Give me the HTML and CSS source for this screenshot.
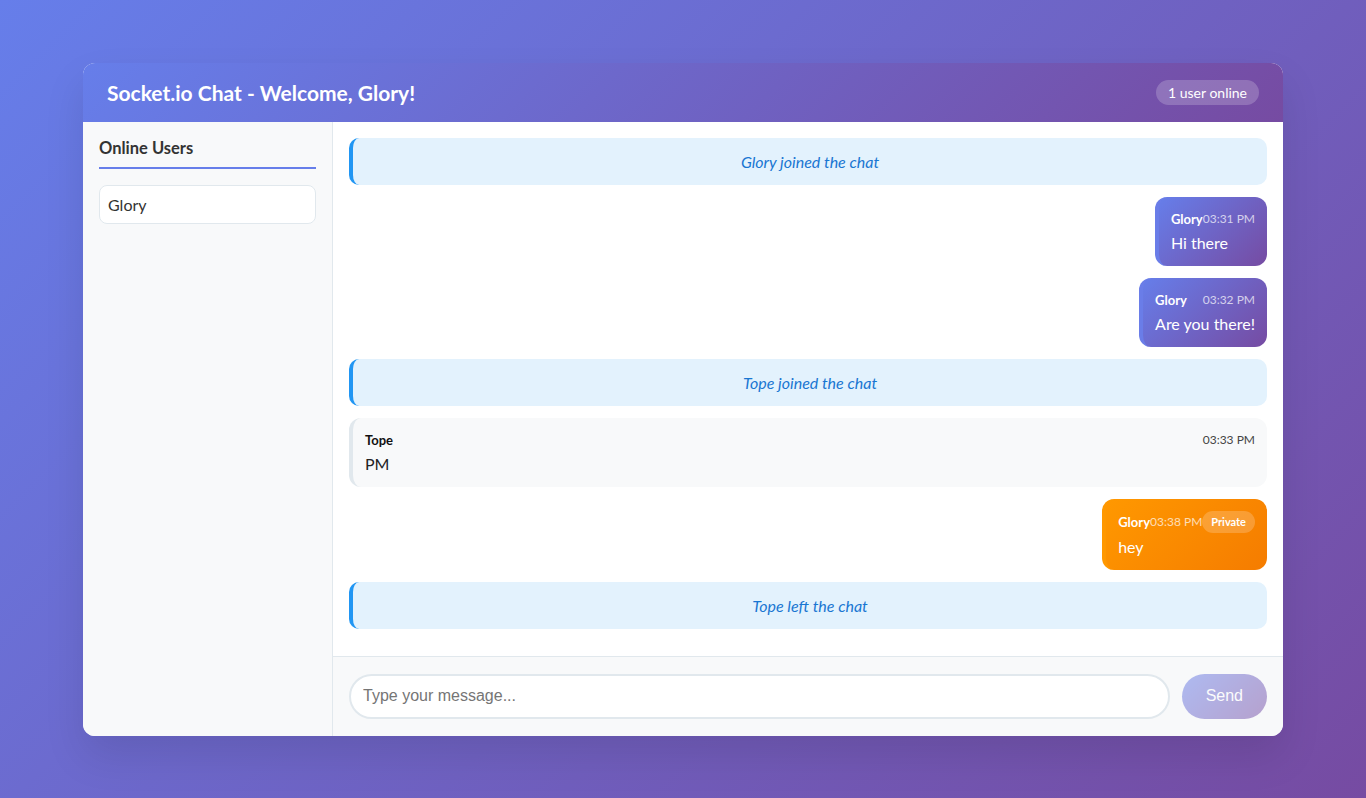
FILE: index.html
```html
<!DOCTYPE html>
<html lang="en">
<head>
<meta charset="utf-8">
<title>Socket.io Chat</title>
<link rel="stylesheet" href="styles.css">
</head>
<body>
<div class="chat-container">
  <header class="chat-header">
    <h1 class="chat-title">Socket.io Chat - Welcome, Glory!</h1>
    <span class="online-badge">1 user online</span>
  </header>
  <div class="chat-body">
    <aside class="sidebar">
      <h3 class="sidebar-title">Online Users</h3>
      <ul class="user-list">
        <li class="user-item">Glory</li>
      </ul>
    </aside>
    <main class="chat-main">
      <div class="messages">
        <div class="message system">Glory joined the chat</div>
        <div class="message own">
          <div class="msg-header"><span class="msg-name">Glory</span><span class="msg-time">03:31 PM</span></div>
          <div class="msg-text">Hi there</div>
        </div>
        <div class="message own">
          <div class="msg-header"><span class="msg-name">Glory</span><span class="msg-time">03:32 PM</span></div>
          <div class="msg-text">Are you there!</div>
        </div>
        <div class="message system">Tope joined the chat</div>
        <div class="message other">
          <div class="msg-header"><span class="msg-name">Tope</span><span class="msg-time">03:33 PM</span></div>
          <div class="msg-text">PM</div>
        </div>
        <div class="message own private">
          <div class="msg-header"><span class="msg-name">Glory</span><span class="msg-time">03:38 PM</span><span class="private-tag">Private</span></div>
          <div class="msg-text">hey</div>
        </div>
        <div class="message system">Tope left the chat</div>
      </div>
      <form class="input-bar">
        <input class="msg-input" type="text" placeholder="Type your message...">
        <button class="send-btn" type="button" disabled>Send</button>
      </form>
    </main>
  </div>
</div>
</body>
</html>
```

FILE: styles.css
```css
* { box-sizing: border-box; }

html, body { height: 100%; }

body {
  margin: 0;
  font-family: Lato, "Open Sans", sans-serif;
  line-height: 1.5;
  background: linear-gradient(135deg, #667eea 0%, #764ba2 100%);
  display: flex;
  align-items: center;
  justify-content: center;
}

.chat-container {
  width: 1200px;
  height: 673px;
  background: #fff;
  border-radius: 12px;
  overflow: hidden;
  display: flex;
  flex-direction: column;
  box-shadow: 0 20px 40px rgba(0, 0, 0, 0.1);
}

.chat-header {
  height: 59px;
  flex-shrink: 0;
  padding: 0 24px;
  display: flex;
  align-items: center;
  justify-content: space-between;
  color: #fff;
  background: linear-gradient(135deg, #667eea 0%, #764ba2 100%);
}

.chat-title {
  margin: 0;
  padding-top: 2px;
  font-size: 21px;
  font-weight: 700;
  line-height: 1.2;
}

.online-badge {
  font-size: 14px;
  line-height: 17px;
  padding: 4px 12px;
  border-radius: 13px;
  background: rgba(255, 255, 255, 0.2);
}

.chat-body {
  flex: 1;
  display: flex;
  min-height: 0;
}

.sidebar {
  width: 250px;
  flex-shrink: 0;
  background: #f8f9fa;
  border-right: 1px solid #e1e8ed;
  padding: 16px;
}

.sidebar-title {
  margin: 0 0 16px;
  padding-top: 1px;
  font-size: 16.5px;
  font-weight: 700;
  line-height: 19px;
  color: #333;
  padding-bottom: 9px;
  border-bottom: 2px solid #667eea;
}

.user-list {
  list-style: none;
  margin: 0;
  padding: 0;
}

.user-item {
  background: #fff;
  border: 1px solid #e1e8ed;
  border-radius: 8px;
  padding: 9px 8px;
  font-size: 16px;
  line-height: 19px;
  color: #333;
}

.chat-main {
  flex: 1;
  display: flex;
  flex-direction: column;
  min-width: 0;
}

.messages {
  flex: 1;
  overflow: hidden;
  padding: 16px;
  display: flex;
  flex-direction: column;
  gap: 12px;
}

.message {
  border-radius: 12px;
  padding: 12px;
  border-left: 4px solid #e1e8ed;
}

.system {
  background: #e3f2fd;
  border-left-color: #2196f3;
  border-radius: 10px;
  color: #1976d2;
  font-style: italic;
  font-size: 16px;
  line-height: 23px;
  text-align: center;
}

.other {
  background: #f8f9fa;
  color: #222;
}

.own {
  align-self: flex-end;
  max-width: 70%;
  color: #fff;
  border-left-color: #6a7de8;
  background: linear-gradient(135deg, #667eea 0%, #764ba2 100%);
}

.own.private {
  border-left-color: #ff9800;
  background: linear-gradient(135deg, #ff9800 0%, #f57c00 100%);
}

.msg-header {
  display: flex;
  justify-content: space-between;
  align-items: center;
  margin-bottom: 2px;
  line-height: 20px;
}

.msg-name {
  font-size: 13px;
  font-weight: 700;
}

.other .msg-name { color: #111; }

.msg-time {
  font-size: 12px;
  opacity: 0.7;
}

.other .msg-time { color: #444; opacity: 1; }

.private-tag {
  font-size: 11px;
  font-weight: 700;
  line-height: 16px;
  padding: 3px 9px;
  border-radius: 11px;
  background: rgba(255, 255, 255, 0.2);
}

.msg-text {
  font-size: 16px;
  line-height: 23px;
}

.input-bar {
  margin: 0;
  flex-shrink: 0;
  display: flex;
  gap: 12px;
  padding: 17px 16px;
  background: #f8f9fa;
  border-top: 1px solid #e1e8ed;
}

.msg-input {
  flex: 1;
  height: 45px;
  padding: 0 12px;
  border: 2px solid #e1e8ed;
  border-radius: 25px;
  font-family: "Liberation Sans", Arial, sans-serif;
  font-size: 16px;
  color: #333;
  background: #fff;
  outline: none;
}

.msg-input::placeholder { color: #757575; }

.send-btn {
  height: 45px;
  padding: 0 24px;
  border: none;
  border-radius: 25px;
  font-family: "Liberation Sans", Arial, sans-serif;
  font-size: 16px;
  color: #fff;
  background: linear-gradient(135deg, #667eea 0%, #764ba2 100%);
  opacity: 0.5;
}
```
